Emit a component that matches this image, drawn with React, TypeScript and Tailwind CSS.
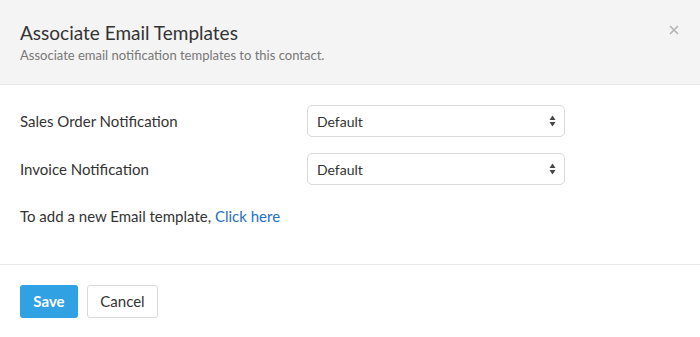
function SelectBox({ value }: { value: string }) {
  return (
    <div className="flex h-8 w-[258px] items-center justify-between rounded-[5px] border border-[#d9d9d9] bg-white pl-[9px] pr-[8px] text-[14px] text-[#333]">
      <span>{value}</span>
      <svg width="7" height="12" viewBox="0 0 7 12">
        <path d="M3.5 0.5 L6.5 5 L0.5 5 Z" fill="#444" />
        <path d="M3.5 11.5 L6.5 7 L0.5 7 Z" fill="#444" />
      </svg>
    </div>
  );
}

export default function App() {
  return (
    <div className="h-[337px] w-[700px] bg-white font-['Lato',sans-serif] text-[#333]">
      {/* 헤더 */}
      <div className="flex justify-between border-b border-[#e6e6e6] bg-[#f4f4f4] px-5 pt-5 pb-5">
        <div>
          <h2 className="text-[19px] leading-[26px] text-[#333]">Associate Email Templates</h2>
          <p className="mt-[1px] text-[13px] leading-[17px] text-[#777]">
            Associate email notification templates to this contact.
          </p>
        </div>
        <svg width="10" height="10" viewBox="0 0 10 10" className="mt-[5px] mr-[1px]">
          <path d="M1 1 L9 9 M9 1 L1 9" stroke="#b3b3b3" strokeWidth="1.6" />
        </svg>
      </div>

      {/* 본문 */}
      <div className="px-5 pt-5 pb-[38px] text-[15px]">
        <div className="flex h-8 items-center">
          <span className="w-[287px]">Sales Order Notification</span>
          <SelectBox value="Default" />
        </div>
        <div className="mt-4 flex h-8 items-center">
          <span className="w-[287px]">Invoice Notification</span>
          <SelectBox value="Default" />
        </div>
        <p className="mt-[21px] leading-5">
          To add a new Email template, <a className="text-[#1f70c4]">Click here</a>
        </p>
      </div>

      {/* 하단 버튼 */}
      <div className="flex gap-[9px] border-t border-[#e8e8e8] px-5 pt-5">
        <button className="h-[33px] w-[58px] rounded-[3px] bg-[#30a2e4] text-[15px] font-bold text-white">
          Save
        </button>
        <button className="h-[33px] w-[71px] rounded-[3px] border border-[#d9d9d9] bg-white text-[15px] text-[#333]">
          Cancel
        </button>
      </div>
    </div>
  );
}
